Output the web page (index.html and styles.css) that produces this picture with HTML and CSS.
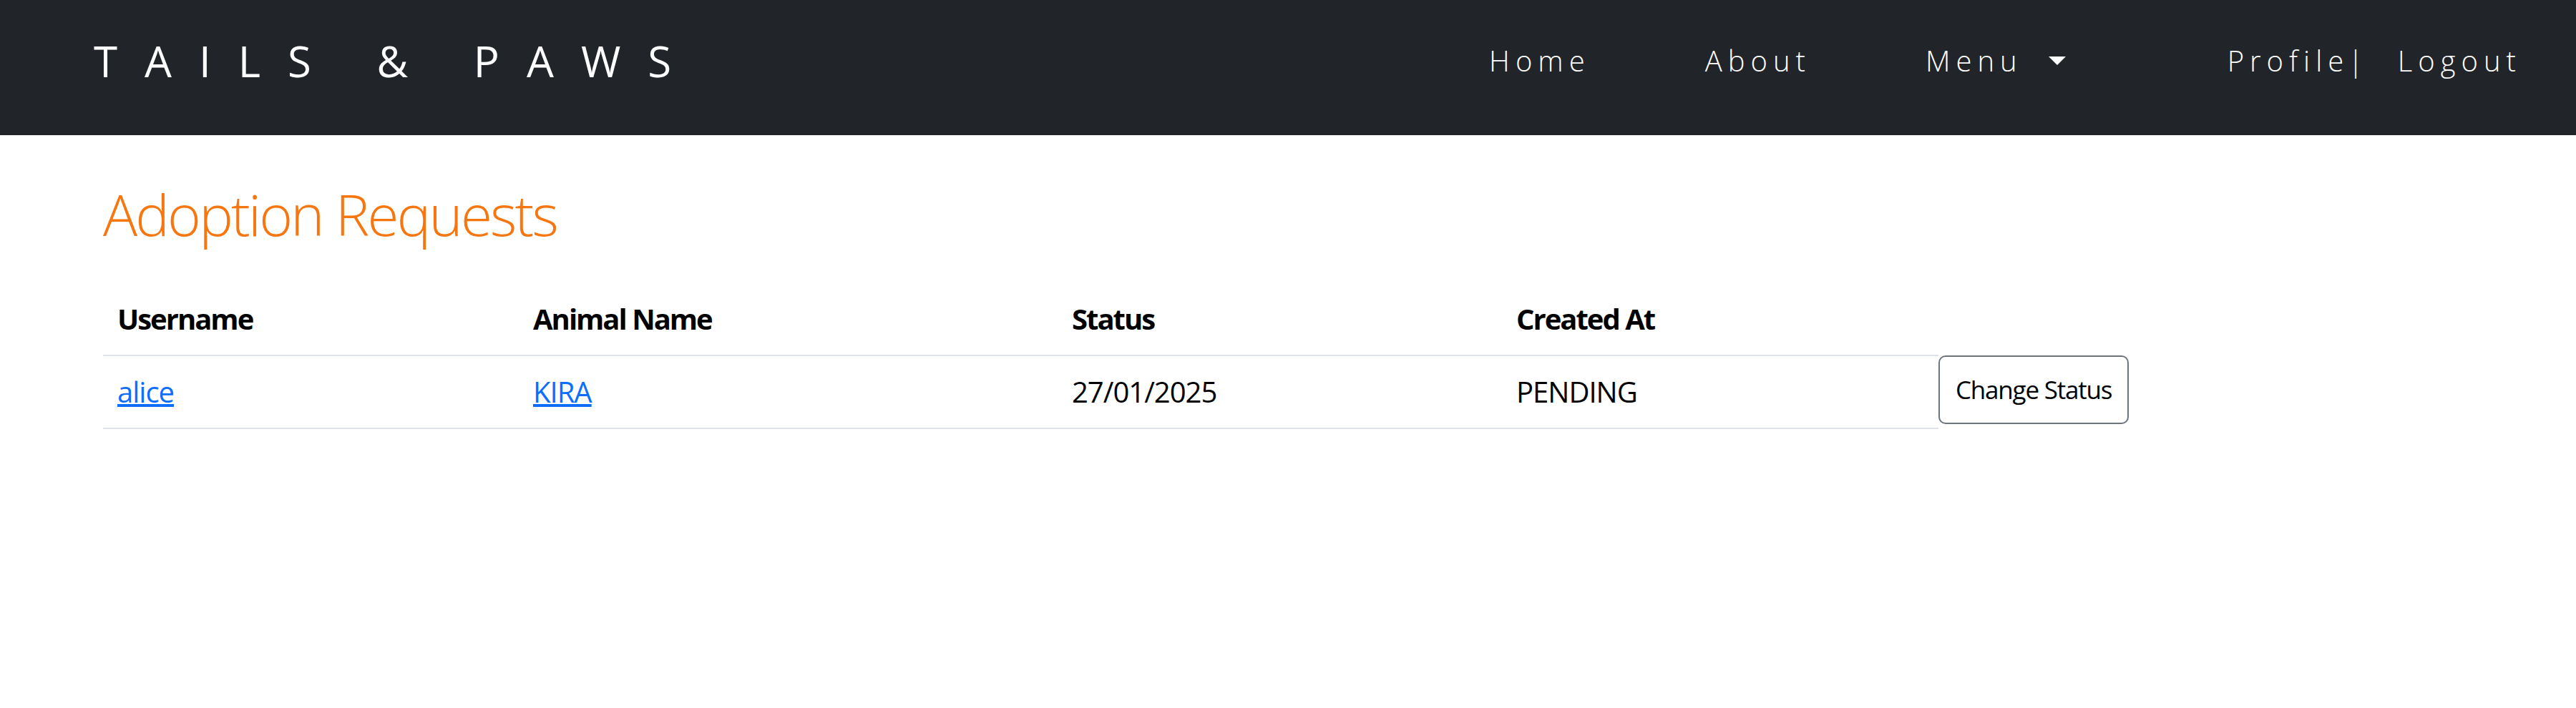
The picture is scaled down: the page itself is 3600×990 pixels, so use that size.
FILE: index.html
```html
<!DOCTYPE html>
<html lang="en">
<head>
<meta charset="utf-8">
<title>Tails &amp; Paws - Adoption Requests</title>
<link rel="stylesheet" href="styles.css">
</head>
<body>
<nav class="navbar">
  <a class="brand" href="#">TAILS &amp; PAWS</a>
  <ul class="nav-main">
    <li><a class="nav-link" href="#">Home</a></li>
    <li><a class="nav-link" href="#">About</a></li>
    <li><a class="nav-link dropdown" href="#">Menu<span class="caret"></span></a></li>
  </ul>
  <div class="nav-user">
    <a class="nav-link" href="#">Profile</a><span class="sep">|</span><a class="nav-link logout" href="#">Logout</a>
  </div>
</nav>
<main class="container">
  <h1 class="page-title">Adoption Requests</h1>
  <table class="requests">
    <colgroup>
      <col class="c-user"><col class="c-animal"><col class="c-status"><col class="c-created"><col class="c-action">
    </colgroup>
    <thead>
      <tr>
        <th>Username</th>
        <th>Animal Name</th>
        <th>Status</th>
        <th>Created At</th>
        <th class="action"></th>
      </tr>
    </thead>
    <tbody>
      <tr>
        <td><a href="#">alice</a></td>
        <td><a href="#">KIRA</a></td>
        <td>27/01/2025</td>
        <td>PENDING</td>
        <td class="action"><button class="btn" type="button">Change Status</button></td>
      </tr>
    </tbody>
  </table>
</main>
</body>
</html>
```
FILE: styles.css
```css
* { box-sizing: border-box; }
body {
  margin: 0;
  font-family: "Open Sans", "Liberation Sans", sans-serif;
  color: #000;
  background: #fff;
}
.navbar {
  height: 189px;
  background: #212529;
  display: flex;
  align-items: center;
  padding: 0 76px 19px 131px;
}
.brand {
  color: #fff;
  text-decoration: none;
  font-size: 60px;
  font-weight: 400;
  line-height: 1.5;
  letter-spacing: 38px;
  white-space: nowrap;
}
.nav-main {
  list-style: none;
  margin: 0 0 0 auto;
  padding: 0;
  display: flex;
  gap: 160px;
}
.nav-link {
  color: #fff;
  text-decoration: none;
  font-size: 40px;
  font-weight: 300;
  line-height: 1.5;
  letter-spacing: 8px;
  white-space: nowrap;
  display: inline-flex;
  align-items: center;
}
.caret {
  display: inline-block;
  margin-left: 36px;
  width: 0;
  height: 0;
  border-top: 12px solid #fff;
  border-left: 12px solid transparent;
  border-right: 12px solid transparent;
}
.nav-user {
  margin-left: 226px;
  display: flex;
  align-items: center;
}
.sep {
  color: #e8fbff;
  font-size: 40px;
  font-weight: 300;
  line-height: 1.5;
  margin-left: -2px;
}
.logout { margin-left: 48px; }

.container { padding: 62px 0 0 144px; }
.page-title {
  margin: 0 0 49px;
  font-size: 80px;
  font-weight: 300;
  line-height: 1.2;
  letter-spacing: -2.8px;
  color: #f7760f;
}
.requests {
  border-collapse: collapse;
  table-layout: fixed;
  width: 2829px;
  font-size: 40px;
  line-height: 1.5;
  letter-spacing: -1px;
}
.c-user { width: 581px; }
.c-animal { width: 753px; }
.c-status { width: 621px; }
.c-created { width: 610px; }
.c-action { width: 264px; }
.requests th, .requests td {
  padding: 20px;
  text-align: left;
  vertical-align: top;
  border-bottom: 2px solid #dee2e6;
}
.requests th { font-weight: 700; letter-spacing: -2px; }
.requests a { color: #0d6efd; }
.requests .action {
  padding: 0;
  border-bottom: none;
}
.btn {
  font-family: inherit;
  font-size: 35px;
  line-height: 52px;
  letter-spacing: -1.2px;
  padding: 20px 22px;
  color: #000;
  background: #fff;
  border: 2px solid #6c757d;
  border-radius: 10px;
  white-space: nowrap;
  cursor: pointer;
}
```
